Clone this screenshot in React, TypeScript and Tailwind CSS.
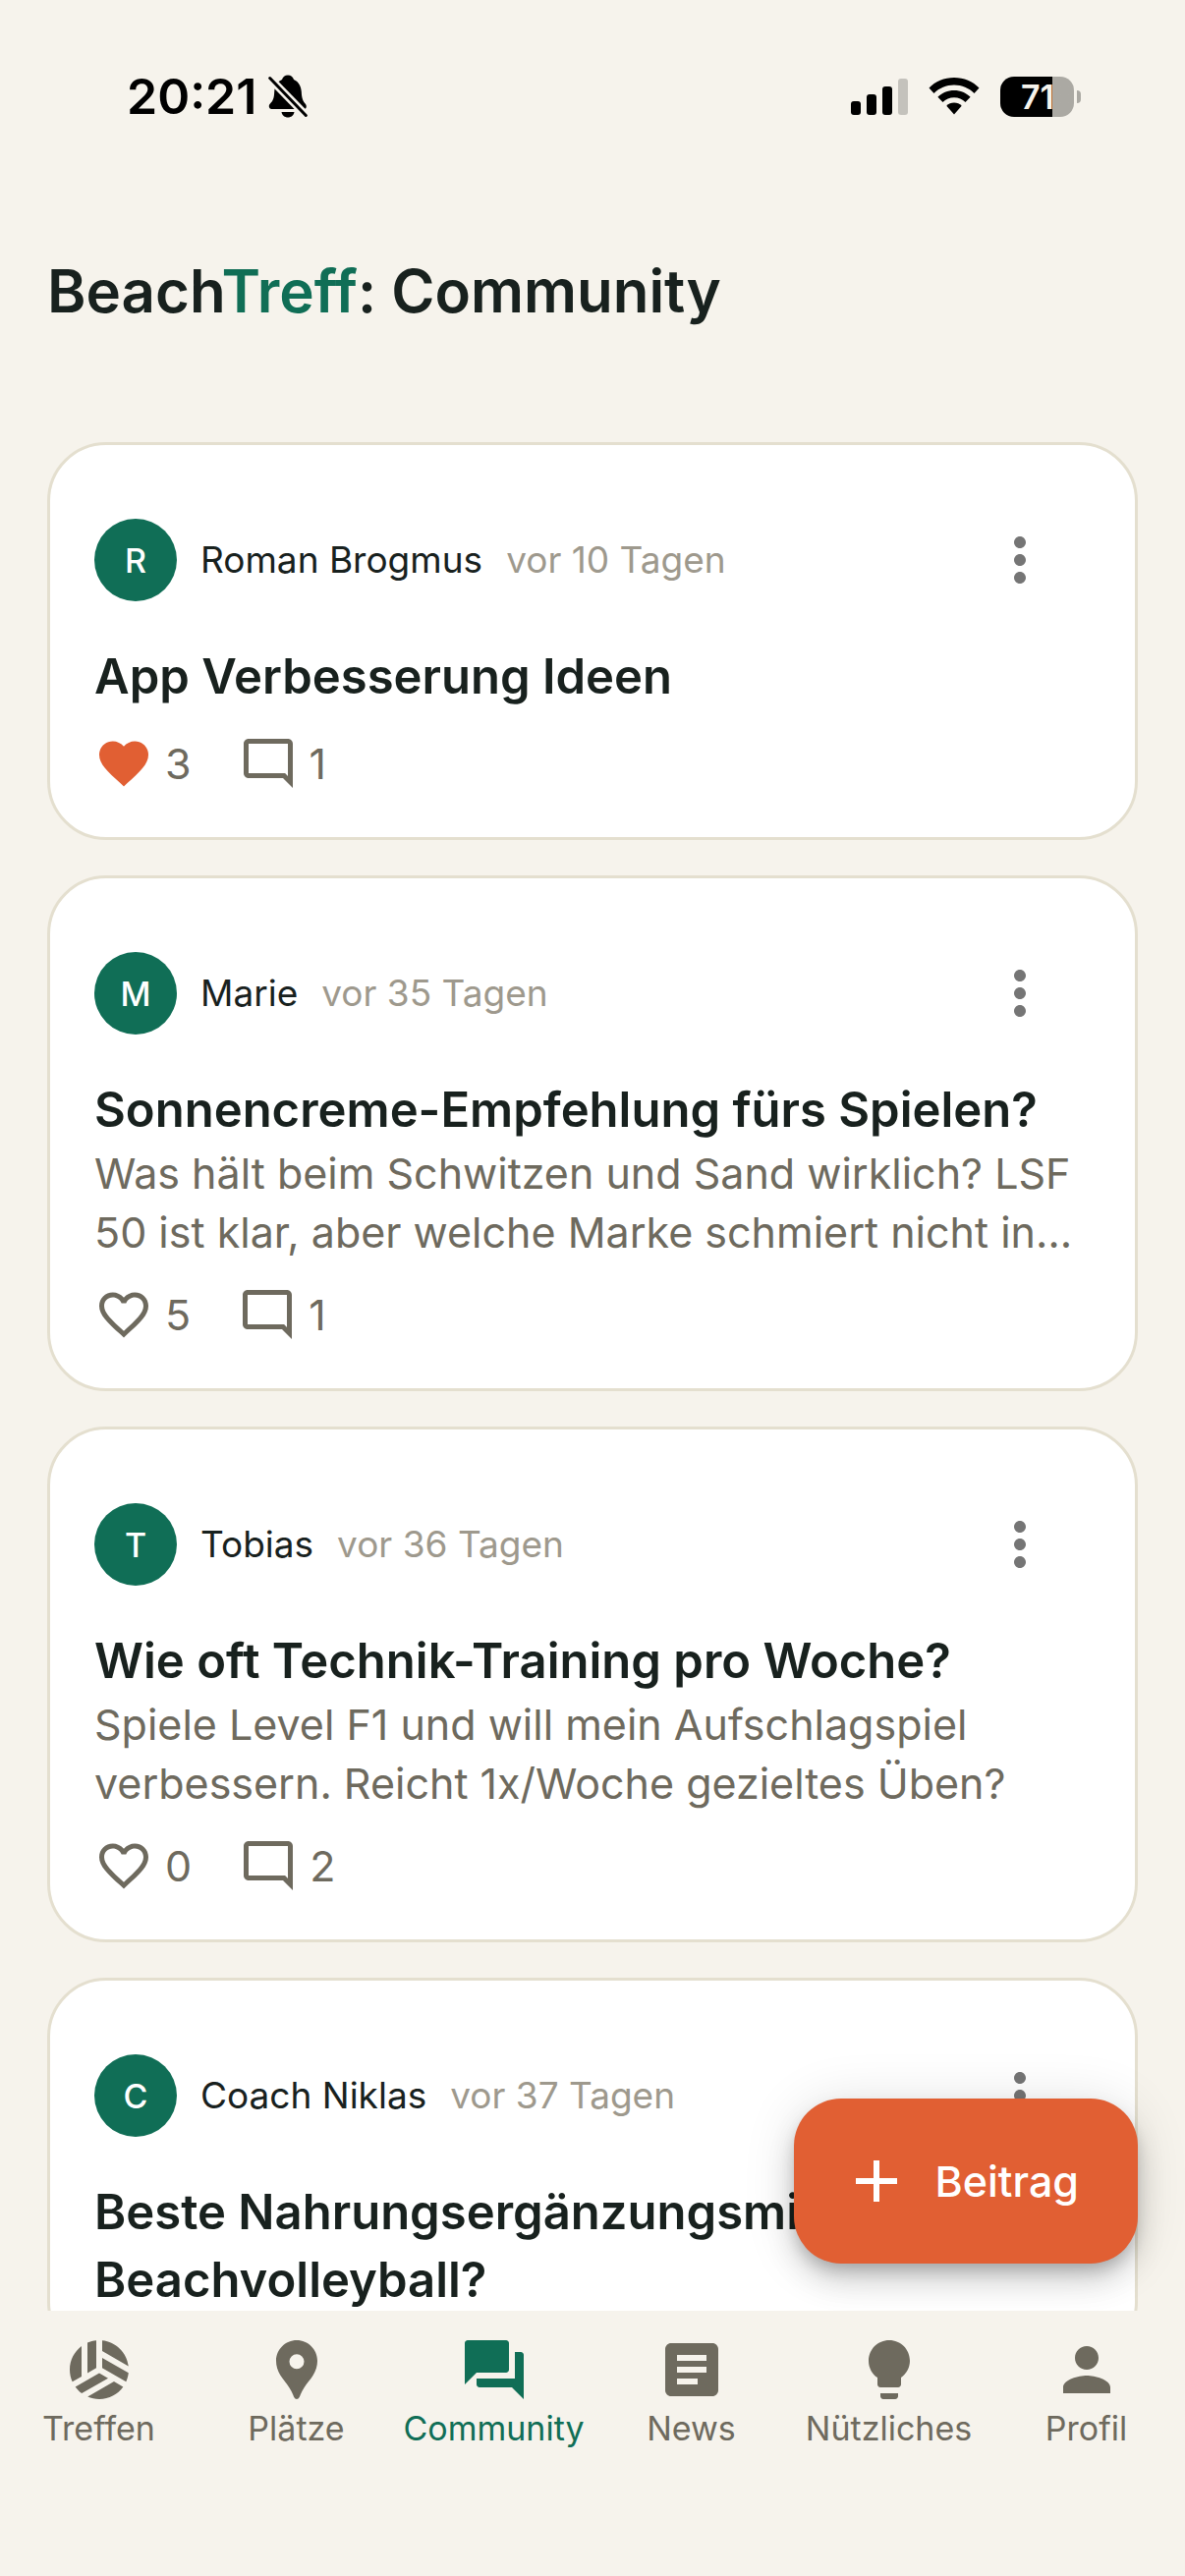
import { useState } from "react";
import type { IconType } from "react-icons";
import {
  MdAdd,
  MdArticle,
  MdFavorite,
  MdFavoriteBorder,
  MdForum,
  MdLightbulb,
  MdLocationPin,
  MdMoreVert,
  MdOutlineModeComment,
  MdPerson,
  MdSportsVolleyball,
} from "react-icons/md";

type Post = {
  author: string;
  age: string;
  title: string;
  body?: string;
  stats?: { likes: number; comments: number };
  liked?: boolean;
};

const posts: Post[] = [
  {
    author: "Roman Brogmus",
    age: "vor 10 Tagen",
    title: "App Verbesserung Ideen",
    stats: { likes: 3, comments: 1 },
    liked: true,
  },
  {
    author: "Marie",
    age: "vor 35 Tagen",
    title: "Sonnencreme-Empfehlung fürs Spielen?",
    body: "Was hält beim Schwitzen und Sand wirklich? LSF 50 ist klar, aber welche Marke schmiert nicht in…",
    stats: { likes: 5, comments: 1 },
  },
  {
    author: "Tobias",
    age: "vor 36 Tagen",
    title: "Wie oft Technik-Training pro Woche?",
    body: "Spiele Level F1 und will mein Aufschlagspiel verbessern. Reicht 1x/Woche gezieltes Üben?",
    stats: { likes: 0, comments: 2 },
  },
  {
    author: "Coach Niklas",
    age: "vor 37 Tagen",
    title: "Beste Nahrungsergänzungsmittel für Beachvolleyball?",
  },
];

const tabs: { label: string; icon: IconType }[] = [
  { label: "Treffen", icon: MdSportsVolleyball },
  { label: "Plätze", icon: MdLocationPin },
  { label: "Community", icon: MdForum },
  { label: "News", icon: MdArticle },
  { label: "Nützliches", icon: MdLightbulb },
  { label: "Profil", icon: MdPerson },
];

function StatusBar() {
  return (
    <div className="flex h-[196px] shrink-0 items-center justify-between pl-[129px] pr-[106px] text-black">
      <div className="flex items-center gap-3">
        <span className="text-[50px] leading-none font-semibold">20:21</span>
        <svg viewBox="0 0 40 44" className="h-11 w-10" aria-label="Stumm">
          <path
            d="M20 0.5c3 0 5.300 1.800 6 4.600 5 2.200 7.500 6.900 7.800 12.400 0.300 6.500 1.500 9.500 4.200 12.500 1.300 1.500 1.200 5-1.500 5H3.500C0.800 35 0 31.500 1.700 29.800 4.900 26.500 5.900 24 6.200 17.500 6.500 12 9 7.300 14 5.100 14.700 2.300 17 0.500 20 0.500Z"
            fill="currentColor"
          />
          <path d="M13.500 38h13c-0.500 3.300-3.200 5.500-6.500 5.500S14 41.300 13.500 38Z" fill="currentColor" />
          <path d="M1.500 3.500 38.500 41.500" stroke="#f6f3ec" strokeWidth="8" />
          <path d="M1.700 3.500 38.300 41.500" stroke="currentColor" strokeWidth="3" strokeLinecap="round" />
        </svg>
      </div>

      <div className="flex items-center gap-[21px]">
        <svg viewBox="0 0 58 37" className="h-[37px] w-[58px]" aria-label="Mobilfunk">
          <rect x="0" y="23" width="10" height="14" rx="3" />
          <rect x="16" y="16" width="10" height="21" rx="3" />
          <rect x="32" y="8" width="10" height="29" rx="3" />
          <rect x="48" y="0" width="10" height="37" rx="3" fill="#c4c2bc" />
        </svg>
        <svg viewBox="0 0 52 38" className="h-[38px] w-[52px]" aria-label="WLAN">
          <path d="M26 0C36 0 45.200 4 51.500 10.500L46.500 16C41 10.500 34 7.500 26 7.500S11 10.500 5.500 16L0.500 10.500C6.800 4 16 0 26 0Z" />
          <path d="M26 13C32.500 13 38.300 15.500 42.600 19.800L37.500 25C34.500 22 30.500 20.300 26 20.300S17.500 22 14.500 25L9.400 19.800C13.700 15.500 19.500 13 26 13Z" />
          <path d="M26 25.500C29 25.500 31.700 26.700 33.700 28.700L26 37.500 18.300 28.700C20.300 26.700 23 25.500 26 25.500Z" />
        </svg>
        <div className="flex items-center gap-[3px]">
          <div className="flex h-[41px] w-[75px] items-center justify-end rounded-[14px] bg-linear-to-r from-black from-71% to-[#aba9a3] to-71% pr-5 text-[34px] font-semibold text-[#f6f3ec]">
            71
          </div>
          <div className="h-[13px] w-1 rounded-r-full bg-[#aba9a3]" />
        </div>
      </div>
    </div>
  );
}

function PostCard({ post }: { post: Post }) {
  const [liked, setLiked] = useState(!!post.liked);

  return (
    <article className="rounded-[60px] border-3 border-[#e4dfcf] bg-white p-[45px]">
      <div className="flex h-36 items-center">
        <div className="flex size-[84px] items-center justify-center rounded-full bg-[#106e56] text-[34px] font-medium text-white">
          {post.author[0]}
        </div>
        <span className="ml-6 text-[37px] text-[#18211e]">{post.author}</span>
        <span className="ml-6 text-[37px] text-[#9e998d]">{post.age}</span>
        <button
          aria-label="Mehr"
          className="ml-auto flex size-36 cursor-pointer items-center justify-center text-[#757575]"
        >
          <MdMoreVert className="size-18" />
        </button>
      </div>

      <h2 className="mt-3 text-[49px] leading-[69px] font-semibold text-[#18211e]">
        {post.title}
      </h2>
      {post.body && (
        <p className="line-clamp-2 text-[43px] leading-[60px] text-[#6e6a5e]">
          {post.body}
        </p>
      )}

      {post.stats && (
        <div className="mt-6 flex gap-12 text-[43px] leading-[60px] text-[#6e6a5e]">
          <button
            aria-label="Gefällt mir"
            aria-pressed={liked}
            onClick={() => setLiked(!liked)}
            className="flex cursor-pointer items-center gap-3"
          >
            {liked ? (
              <MdFavorite className="size-15 text-[#e15f33]" />
            ) : (
              <MdFavoriteBorder className="size-15" />
            )}
            {post.stats.likes + Number(liked) - Number(!!post.liked)}
          </button>
          <button
            aria-label="Kommentare"
            className="flex cursor-pointer items-center gap-3"
          >
            <MdOutlineModeComment className="size-15" />
            {post.stats.comments}
          </button>
        </div>
      )}
    </article>
  );
}

export default function App() {
  const [active, setActive] = useState("Community");

  return (
    <div className="flex h-screen flex-col bg-[#f6f3ec] font-['Inter',sans-serif]">
      <StatusBar />

      <header className="flex h-[200px] shrink-0 items-center px-12">
        <h1 className="text-[60px] font-semibold text-[#18211e]">
          Beach<span className="text-[#106e56]">Treff</span>: Community
        </h1>
      </header>

      <div className="relative min-h-0 flex-1">
        <main className="flex h-full flex-col gap-9 overflow-y-auto px-12 pt-[54px] [scrollbar-width:none]">
          {posts.map((post) => (
            <PostCard key={post.title} post={post} />
          ))}
        </main>

        <button className="absolute right-12 bottom-12 flex h-[168px] cursor-pointer items-center gap-6 rounded-[48px] bg-[#e15f33] pr-[60px] pl-12 text-[43px] font-medium text-white shadow-[0_9px_15px_-3px_rgba(0,0,0,0.2),0_18px_30px_rgba(0,0,0,0.14),0_3px_54px_rgba(0,0,0,0.12)]">
          <MdAdd className="size-18" />
          Beitrag
        </button>
      </div>

      <nav className="relative grid shrink-0 grid-cols-6 bg-[#f6f3ec] pt-6 pb-[126px]">
        {tabs.map(({ label, icon: Icon }) => (
          <a
            key={label}
            href="#"
            onClick={() => setActive(label)}
            className={`flex flex-col items-center text-[34px] leading-[48px] ${
              active === label ? "text-[#106e56]" : "text-[#6e6a5e]"
            }`}
          >
            <Icon className="size-18" />
            {label}
          </a>
        ))}
      </nav>
    </div>
  );
}
